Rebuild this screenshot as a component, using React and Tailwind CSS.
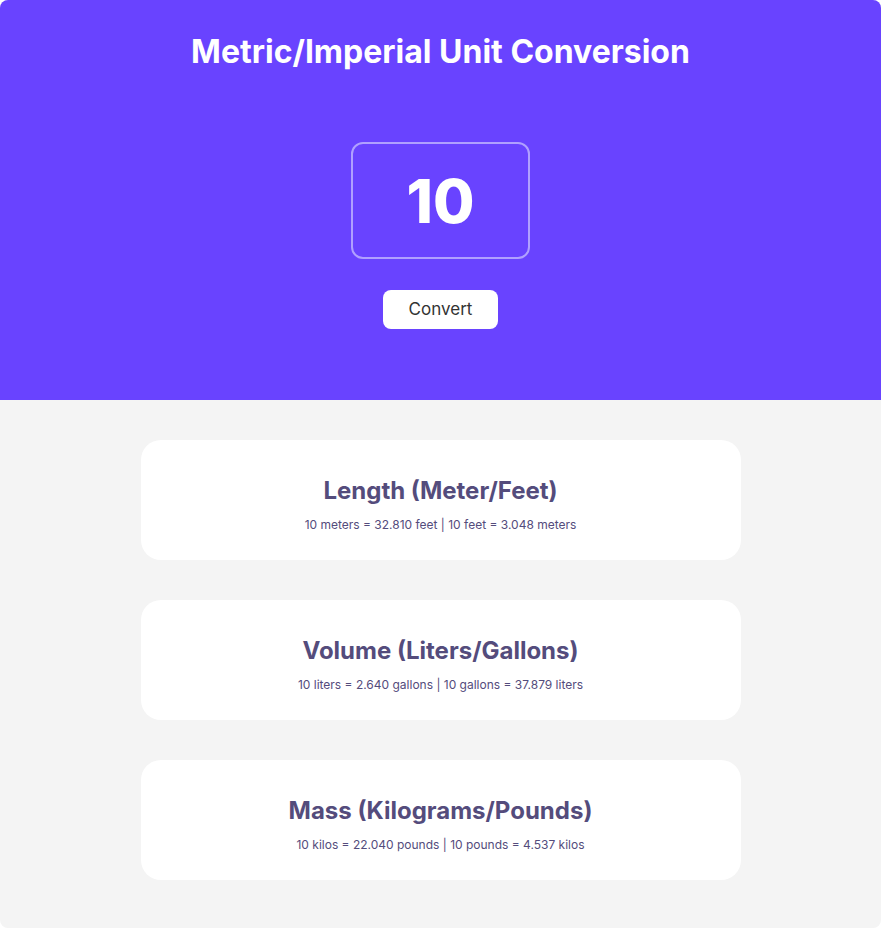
import React, { useState } from 'react';

const FONT = { fontFamily: 'Inter, "Noto Sans", sans-serif' };

const convert = (v) => [
    {
        title: 'Length (Meter/Feet)',
        text: `${v} meters = ${(v * 3.281).toFixed(3)} feet | ${v} feet = ${(v / 3.281).toFixed(3)} meters`,
    },
    {
        title: 'Volume (Liters/Gallons)',
        text: `${v} liters = ${(v * 0.264).toFixed(3)} gallons | ${v} gallons = ${(v / 0.264).toFixed(3)} liters`,
    },
    {
        title: 'Mass (Kilograms/Pounds)',
        text: `${v} kilos = ${(v * 2.204).toFixed(3)} pounds | ${v} pounds = ${(v / 2.204).toFixed(3)} kilos`,
    },
];

const App = () => {
    const [input, setInput] = useState('10');
    const [value, setValue] = useState(10);
    const results = convert(value);

    return (
        <div className="w-full min-h-screen bg-white" style={FONT}>
            <div className="rounded-lg overflow-hidden bg-[#f4f4f4]">
                {/* Header */}
                <div className="bg-[#6943ff] h-[400px] flex flex-col items-center pt-[33px]">
                    <h1 className="text-white text-[32px] leading-[38px] font-bold">Metric/Imperial Unit Conversion</h1>
                    <input
                        value={input}
                        onChange={(e) => setInput(e.target.value)}
                        className="mt-[71px] w-[179px] h-[117px] rounded-xl border-2 border-[#b0a0ff] bg-transparent text-center text-white text-[60px] font-extrabold outline-none"
                    />
                    <button
                        onClick={() => setValue(Number(input) || 0)}
                        className="mt-[31px] w-[115px] h-[39px] rounded-lg bg-white text-[#333] text-[17px]"
                    >
                        Convert
                    </button>
                </div>

                {/* Results */}
                <div className="flex flex-col items-center gap-10 pt-10 pb-12">
                    {results.map((r) => (
                        <div key={r.title} className="w-[600px] h-[120px] bg-white rounded-[20px] flex flex-col items-center justify-center pt-[10px]">
                            <h2 className="text-[#544c7c] text-[24px] leading-[28px] font-bold">{r.title}</h2>
                            <p className="mt-[12px] text-[#544c7c] text-[12px] leading-[16px]">{r.text}</p>
                        </div>
                    ))}
                </div>
            </div>
        </div>
    );
};

export default App;
